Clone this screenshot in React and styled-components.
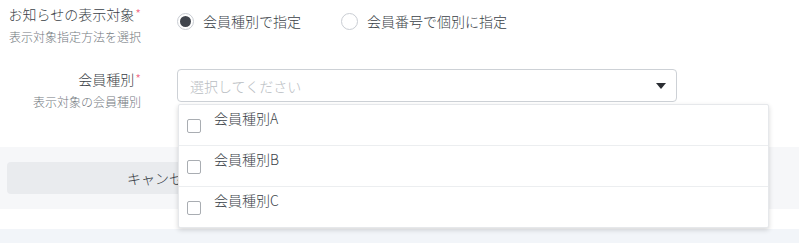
import React from "react";
import styled, { createGlobalStyle } from "styled-components";

const GlobalStyle = createGlobalStyle`
  html, body {
    margin: 0;
    padding: 0;
    background: #ffffff;
    font-family: "Noto Sans CJK JP", "Noto Sans", sans-serif;
    font-weight: 300;
    color: #3a3f47;
  }
`;

const Page = styled.div`
  width: 799px;
  height: 243px;
  overflow: hidden;
  display: flex;
  flex-direction: column;
`;

const Form = styled.div`
  display: flex;
  flex-direction: column;
  padding: 4px 0 0 7px;
  gap: 23px;
  height: 143px;
  box-sizing: border-box;
`;

const Row = styled.div`
  display: grid;
  grid-template-columns: 134px 1fr;
  column-gap: 36px;
  align-items: start;
`;

const LabelCol = styled.div`
  display: flex;
  flex-direction: column;
  align-items: flex-end;
  gap: 4px;
  white-space: nowrap;
`;

const Label = styled.div`
  font-size: 14px;
  line-height: 20px;
  color: #3a3f47;
`;

const Required = styled.span`
  color: #f0607e;
  font-size: 13px;
  vertical-align: top;
  margin-left: 1px;
`;

const Sub = styled.div`
  font-size: 12px;
  line-height: 18px;
  color: #737980;
`;

const RadioGroup = styled.div`
  display: flex;
  align-items: center;
  gap: 40px;
  height: 34px;
`;

const RadioItem = styled.label`
  display: flex;
  align-items: center;
  gap: 9px;
  font-size: 14px;
  color: #3a3f47;
`;

const RadioDot = styled.span`
  width: 17px;
  height: 17px;
  box-sizing: border-box;
  border-radius: 50%;
  border: 1px solid #c9cdd3;
  background: #fff;
  display: flex;
  align-items: center;
  justify-content: center;
  &::after {
    content: "";
    width: 11px;
    height: 11px;
    border-radius: 50%;
    background: ${(p) => (p.$checked ? "#40454d" : "transparent")};
  }
`;

const SelectWrap = styled.div`
  position: relative;
  width: 500px;
`;

const SelectBox = styled.div`
  height: 33px;
  box-sizing: border-box;
  border: 1px solid #cdd1d6;
  border-radius: 4px;
  display: flex;
  align-items: center;
  justify-content: space-between;
  padding: 0 10px 0 12px;
  background: #fff;
`;

const Placeholder = styled.span`
  font-size: 14px;
  color: #b9bdc2;
`;

const Caret = styled.span`
  width: 0;
  height: 0;
  border-left: 5px solid transparent;
  border-right: 5px solid transparent;
  border-top: 6px solid #2b2e33;
`;

const Menu = styled.ul`
  position: absolute;
  top: 35px;
  left: 1px;
  width: 589px;
  margin: 0;
  padding: 0;
  list-style: none;
  background: #fff;
  border: 1px solid #e6e8eb;
  box-shadow: 0 2px 5px rgba(0, 0, 0, 0.16);
  border-radius: 2px;
  z-index: 10;
`;

const Option = styled.li`
  height: 40px;
  display: flex;
  align-items: center;
  gap: 13px;
  padding-left: 8px;
  font-size: 14px;
  color: #3a3f47;
  & + & {
    border-top: 1px solid #eceef0;
  }
`;

const Checkbox = styled.span`
  width: 14px;
  height: 14px;
  box-sizing: border-box;
  border: 1px solid #a9adb2;
  border-radius: 2px;
  margin-top: 1px;
  background: #fff;
`;

const OptionText = styled.span`
  margin-top: -7px;
  margin-bottom: 8px;
`;

const Footer = styled.div`
  height: 62px;
  margin-top: 4px;
  background: #f6f7f9;
  padding: 15px 0 0 7px;
  box-sizing: border-box;
`;

const CancelButton = styled.button`
  width: 310px;
  height: 32px;
  border: none;
  border-radius: 4px;
  background: #e9ebee;
  font-family: inherit;
  font-weight: 300;
  font-size: 14px;
  color: #333840;
`;

const BottomBand = styled.div`
  margin-top: 20px;
  flex: 1;
  background: #f2f5f9;
`;

const options = ["会員種別A", "会員種別B", "会員種別C"];

export default function App() {
  return (
    <Page>
      <GlobalStyle />
      <Form>
        <Row>
          <LabelCol>
            <Label>
              お知らせの表示対象<Required>*</Required>
            </Label>
            <Sub>表示対象指定方法を選択</Sub>
          </LabelCol>
          <RadioGroup>
            <RadioItem>
              <RadioDot $checked />
              会員種別で指定
            </RadioItem>
            <RadioItem>
              <RadioDot />
              会員番号で個別に指定
            </RadioItem>
          </RadioGroup>
        </Row>
        <Row>
          <LabelCol>
            <Label>
              会員種別<Required>*</Required>
            </Label>
            <Sub>表示対象の会員種別</Sub>
          </LabelCol>
          <SelectWrap>
            <SelectBox>
              <Placeholder>選択してください</Placeholder>
              <Caret />
            </SelectBox>
            <Menu>
              {options.map((o) => (
                <Option key={o}>
                  <Checkbox />
                  <OptionText>{o}</OptionText>
                </Option>
              ))}
            </Menu>
          </SelectWrap>
        </Row>
      </Form>
      <Footer>
        <CancelButton>キャンセル</CancelButton>
      </Footer>
      <BottomBand />
    </Page>
  );
}
